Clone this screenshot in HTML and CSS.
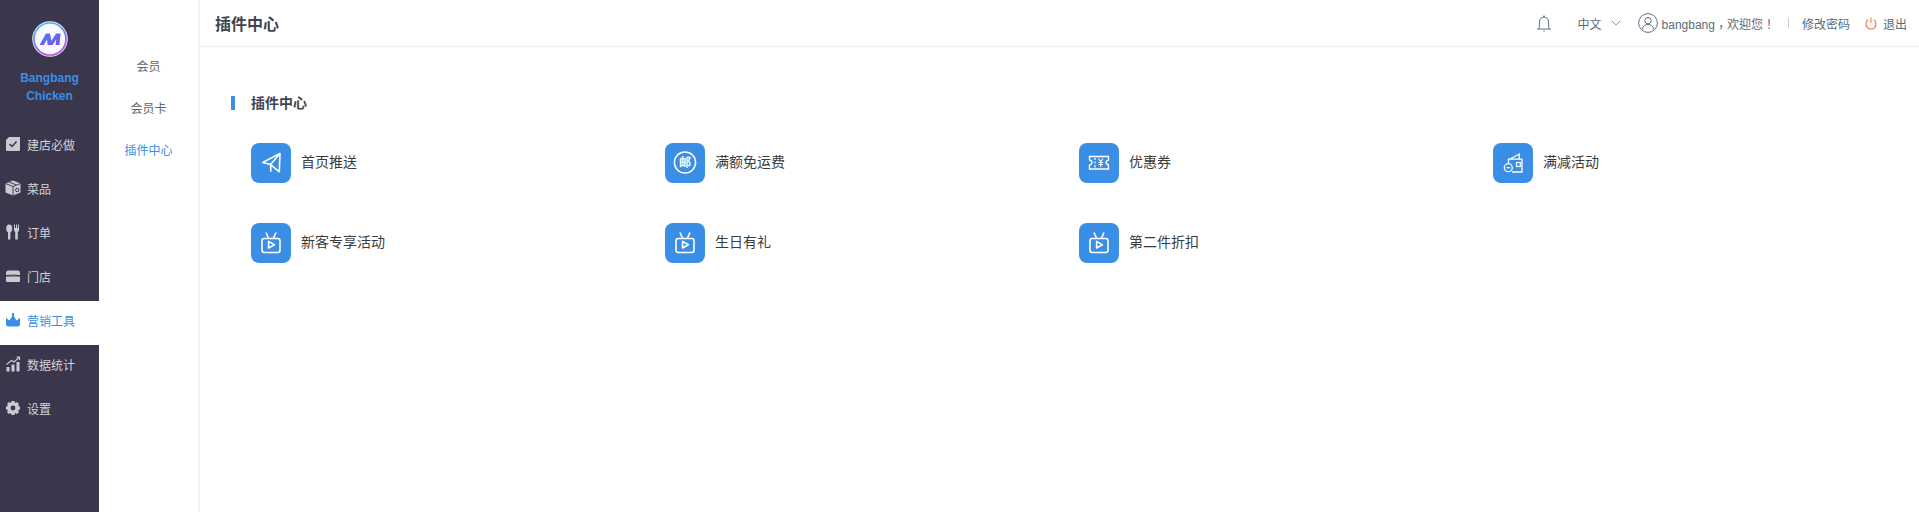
FILE: index.html
```html
<!DOCTYPE html>
<html lang="zh">
<head>
<meta charset="utf-8">
<title>插件中心</title>
<link rel="stylesheet" href="styles.css">
</head>
<body>
<div class="app">
  <aside class="sidebar">
    <div class="brand">
      <svg class="logo" viewBox="0 0 36 36">
        <defs>
          <linearGradient id="ring" x1="0.3" y1="0" x2="0.7" y2="1"><stop offset="0" stop-color="#3fc4ff"/><stop offset="0.5" stop-color="#7a78f0"/><stop offset="1" stop-color="#c44ae8"/></linearGradient>
          <linearGradient id="glyph" x1="0" y1="0" x2="1" y2="1"><stop offset="0" stop-color="#4a80f8"/><stop offset="1" stop-color="#7a50f0"/></linearGradient>
        </defs>
        <circle cx="18" cy="18" r="17.8" fill="#e4e4f0"/>
        <circle cx="18" cy="18" r="16" fill="#fbfbff" stroke="url(#ring)" stroke-width="1.7"/>
        <path d="M7.5 24 L14 12.5 H18 L19.4 20 L24 12.5 H28.6 L27.4 24 H23.6 L24.2 18.5 L20.6 24 H15.6 L15 18.5 L11.8 24 Z" fill="url(#glyph)"/>
      </svg>
      <div class="brand-name">Bangbang<br>Chicken</div>
    </div>
    <nav class="menu">
      <a class="menu-item">
        <svg class="menu-icon" viewBox="0 0 16 16"><path d="M1 4 L4 1 H15 V14 Q15 15 14 15 H2 Q1 15 1 14 Z" fill="#c9cbd3"/><path d="M4.5 8 L7 10.5 L11.5 5.5" fill="none" stroke="#3a3649" stroke-width="1.5"/></svg>
        建店必做</a>
      <a class="menu-item">
        <svg class="menu-icon" viewBox="0 0 16 16"><path d="M8 0.5 L15.5 3.5 V12.5 L8 15.5 L0.5 12.5 V3.5 Z" fill="#c9cbd3"/><path d="M0.5 3.5 L8 6.5 L15.5 3.5 M8 6.5 V15.5 M4 2 L11.5 5" fill="none" stroke="#3a3649" stroke-width="0.9"/><circle cx="12.2" cy="10" r="1.7" fill="none" stroke="#3a3649"/></svg>
        菜品</a>
      <a class="menu-item">
        <svg class="menu-icon" viewBox="0 0 16 16"><ellipse cx="4.2" cy="4.5" rx="3" ry="4" fill="#c9cbd3"/><rect x="3" y="7" width="2.4" height="8.5" fill="#c9cbd3"/><path d="M9 0.5 H10 V4 H11 V0.5 H12 V4 H13 V0.5 H14 V6 Q14 7.5 12.8 8 V15.5 H10.2 V8 Q9 7.5 9 6 Z" fill="#c9cbd3"/></svg>
        订单</a>
      <a class="menu-item">
        <svg class="menu-icon" viewBox="0 0 16 16"><path d="M3 2.5 H13 Q15 2.5 15 5 V7 H1 V5 Q1 2.5 3 2.5 Z" fill="#c9cbd3"/><path d="M1 8.5 H15 V13 Q15 14 14 14 H2 Q1 14 1 13 Z" fill="#c9cbd3"/><rect x="4" y="6.3" width="8" height="1.2" fill="#7d7c88"/></svg>
        门店</a>
      <a class="menu-item active">
        <svg class="menu-icon" viewBox="0 0 16 16"><path d="M1 6 L4.5 8.5 L6.6 5 H7 V1 H9 V5 H9.4 L11.5 8.5 L15 6 V12 Q15 14.5 12.5 14.5 H3.5 Q1 14.5 1 12 Z" fill="#3a8ee6"/></svg>
        营销工具</a>
      <a class="menu-item">
        <svg class="menu-icon" viewBox="0 0 16 16"><rect x="1.5" y="11" width="3" height="4.5" fill="#c9cbd3"/><rect x="6.5" y="8.5" width="3" height="7" fill="#c9cbd3"/><rect x="11.5" y="6" width="3" height="9.5" fill="#c9cbd3"/><path d="M1.5 8.5 L6.5 4.5 L9 6 L14 1.5 M11.5 1 H14.5 V4" fill="none" stroke="#c9cbd3" stroke-width="1.1"/></svg>
        数据统计</a>
      <a class="menu-item">
        <svg class="menu-icon" viewBox="0 0 16 16"><path fill-rule="evenodd" d="M6.5 1 H9.5 L10 3 L12 2 L14 4.2 L13 6 L15 6.5 V9.5 L13 10 L14 12 L12 14 L10 13 L9.5 15 H6.5 L6 13 L4 14 L2 12 L3 10 L1 9.5 V6.5 L3 6 L2 4.2 L4 2 L6 3 Z M8 5.6 A2.4 2.4 0 1 0 8 10.4 A2.4 2.4 0 1 0 8 5.6 Z" fill="#c9cbd3"/></svg>
        设置</a>
    </nav>
  </aside>
  <aside class="submenu">
    <a class="sub-item">会员</a>
    <a class="sub-item">会员卡</a>
    <a class="sub-item current">插件中心</a>
  </aside>
  <div class="main">
    <header class="topbar">
      <h1 class="page-title">插件中心</h1>
      <div class="tools">
        <svg class="bell" viewBox="0 0 16 17"><path d="M1 14 H15 M3 14 Q3.4 12.5 3.4 10 V7 C3.4 4 5.5 2.2 8 2.2 C10.5 2.2 12.6 4 12.6 7 V10 Q12.6 12.5 13 14 M7 1.2 H9 M7.4 16 H8.6" fill="none" stroke="#606f80" stroke-width="1"/></svg>
        <span class="lang">中文</span>
        <svg class="chevron" viewBox="0 0 10 6"><path d="M0.7 0.7 L5 5 L9.3 0.7" fill="none" stroke="#8a94a0" stroke-width="1"/></svg>
        <svg class="avatar" viewBox="0 0 20 20"><circle cx="10" cy="10" r="9.4" fill="none" stroke="#606f80"/><circle cx="10" cy="7.6" r="3.2" fill="none" stroke="#606f80"/><path d="M4.4 16.4 C5 12.8 7.4 11.4 10 11.4 C12.6 11.4 15 12.8 15.6 16.4" fill="none" stroke="#606f80"/></svg>
        <span class="welcome" lang="zh-Hant">bangbang<span class="comma">，</span>欢迎您！</span>
        <span class="divider"></span>
        <a class="tool-link">修改密码</a>
        <svg class="power" viewBox="0 0 12 13"><path d="M3.4 2.8 A5 5 0 1 0 8.6 2.8" fill="none" stroke="#f26a5a" stroke-width="1.1"/><path d="M6 0.5 V6" stroke="#f08a3c" stroke-width="1.1"/></svg>
        <a class="tool-link logout">退出</a>
      </div>
    </header>
    <section class="content">
      <h2 class="section-title">插件中心</h2>
      <div class="plugins">
        <a class="plugin">
          <span class="plugin-icon"><svg viewBox="0 0 40 40"><path d="M29 10.5 L11.8 19.4 L19.6 21.6 L19.8 28.8 M19.6 21.6 L29 10.5 L28.3 28.8 L19.6 21.6" fill="none" stroke="#fff" stroke-width="1.6" stroke-linejoin="round"/></svg></span>
          <span class="plugin-name">首页推送</span></a>
        <a class="plugin">
          <span class="plugin-icon"><svg viewBox="0 0 40 40"><circle cx="20" cy="19.5" r="10.6" fill="none" stroke="#fff" stroke-width="1.5"/><text x="20" y="23.8" class="stamp">邮</text></svg></span>
          <span class="plugin-name">满额免运费</span></a>
        <a class="plugin">
          <span class="plugin-icon"><svg viewBox="0 0 40 40"><path d="M10.5 13.5 H29.5 V17 Q27.5 17.5 27 19.5 Q27.5 21.5 29.5 22 V26 H10.5 V22 Q13 21.5 13 19.5 Q13 17.5 10.5 17 Z" fill="none" stroke="#fff" stroke-width="1.3"/><path d="M16 15 V17 M16 18.5 V20.5 M16 22 V24.5" stroke="#fff" stroke-width="1.2"/><path d="M19.5 15.5 L21.7 18.8 L24 15.5 M21.7 18.8 V24 M19.5 19.5 H24 M19.5 21.5 H24" fill="none" stroke="#fff" stroke-width="1.1"/></svg></span>
          <span class="plugin-name">优惠券</span></a>
        <a class="plugin">
          <span class="plugin-icon"><svg viewBox="0 0 40 40"><path d="M17 16 L26.3 11 V16 M15.5 20 V16.2 H29 V29 H19" fill="none" stroke="#fff" stroke-width="1.3"/><rect x="23.5" y="19.5" width="3.8" height="4" fill="none" stroke="#fff" stroke-width="1.2"/><circle cx="15.3" cy="24.7" r="4" fill="#3a8ee6" stroke="#fff" stroke-width="1.3"/><path d="M13.4 24.7 H17.2" stroke="#fff" stroke-width="1.2"/></svg></span>
          <span class="plugin-name">满减活动</span></a>
        <a class="plugin">
          <span class="plugin-icon"><svg viewBox="0 0 40 40"><defs><g id="tv"><rect x="11" y="15.5" width="18" height="14" rx="2.2" fill="none" stroke="#fff" stroke-width="1.6"/><path d="M15.2 10 L17.5 15 M24.8 10 L22.5 15" stroke="#fff" stroke-width="1.6" stroke-linecap="round"/><path d="M17.6 18.4 L23.4 21.7 L17.6 25 Z" fill="none" stroke="#fff" stroke-width="1.6" stroke-linejoin="round"/></g></defs><use href="#tv"/></svg></span>
          <span class="plugin-name">新客专享活动</span></a>
        <a class="plugin">
          <span class="plugin-icon"><svg viewBox="0 0 40 40"><use href="#tv"/></svg></span>
          <span class="plugin-name">生日有礼</span></a>
        <a class="plugin">
          <span class="plugin-icon"><svg viewBox="0 0 40 40"><use href="#tv"/></svg></span>
          <span class="plugin-name">第二件折扣</span></a>
      </div>
    </section>
  </div>
</div>
</body>
</html>
```
FILE: styles.css
```css
* { box-sizing: border-box; }
html, body { margin: 0; height: 100%; background: #fff; overflow: hidden; }
body { font-family: "Liberation Sans", "Noto Sans CJK SC", sans-serif; font-size: 12px; color: #333; }
a { color: inherit; text-decoration: none; }
.app { display: flex; height: 512px; }

.sidebar { width: 99px; flex: none; background: #3a364b; }
.brand { height: 125px; padding-top: 21px; display: flex; flex-direction: column; align-items: center; }
.logo { width: 36px; height: 36px; display: block; }
.brand-name { margin-top: 12px; font-weight: bold; font-size: 12px; line-height: 18px; color: #3a8ee6; text-align: center; }
.menu { display: flex; flex-direction: column; }
.menu-item { height: 44px; padding: 0 0 6px 5px; display: flex; align-items: center; gap: 6px; color: #d2d3da; }
.menu-item.active { background: #fff; color: #3a8ee6; }
.menu-icon { width: 16px; height: 16px; flex: none; }

.submenu { width: 101px; flex: none; border-right: 2px solid #f3f4f6; padding-top: 44px; display: flex; flex-direction: column; }
.sub-item { height: 42px; display: flex; align-items: center; justify-content: center; color: #5f6670; }
.sub-item.current { color: #3a8ee6; }

.main { flex: 1; min-width: 0; }
.topbar { height: 47px; border-bottom: 1px solid #ebedf0; padding: 0 12px 0 15px; display: flex; align-items: center; justify-content: space-between; }
.page-title { margin: 0; font-size: 16px; font-weight: bold; color: #3f4451; }
.tools { display: flex; align-items: center; color: #5c6b7a; }
.bell { width: 16px; height: 17px; margin-right: 26px; }
.lang { margin-right: 9px; }
.chevron { width: 10px; height: 6px; margin-right: 17px; }
.avatar { width: 20px; height: 20px; margin-right: 4px; }
.welcome { font-family: "Liberation Sans", "Noto Sans CJK TC", sans-serif; }
.comma { display: inline-block; transform: translateY(3px); }
.divider { width: 1px; height: 10px; background: #c8ced4; margin: 0 13px; }
.power { width: 12px; height: 13px; margin: 0 6px 0 15px; }

.content { padding: 49px 0 0 31px; }
.section-title { margin: 0; height: 14px; line-height: 14px; font-size: 14px; font-weight: bold; color: #3f4451; border-left: 4px solid #3a8ee6; padding-left: 16px; }
.plugins { margin-top: 33px; padding-left: 20px; display: grid; grid-template-columns: repeat(4, 414px); row-gap: 40px; }
.plugin { display: flex; align-items: center; gap: 10px; font-size: 14px; color: #3c3c3c; }
.plugin-icon { width: 40px; height: 40px; border-radius: 8px; background: #3a8ee6; flex: none; }
.plugin-icon svg { width: 40px; height: 40px; display: block; }
.plugin-name { padding-bottom: 4px; }
.stamp { font-size: 12px; font-weight: bold; fill: #fff; text-anchor: middle; font-family: "Noto Sans CJK SC", sans-serif; }
```
